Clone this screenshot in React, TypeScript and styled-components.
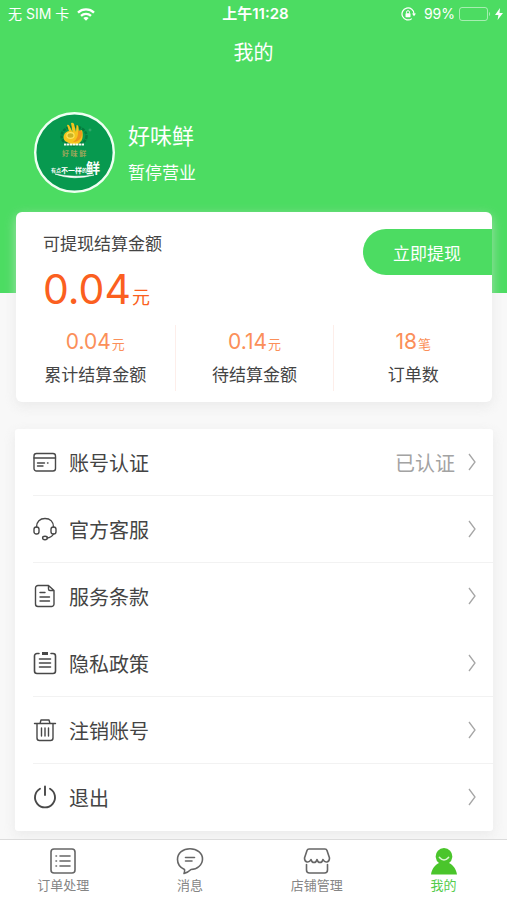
import React from "react";
import styled, { createGlobalStyle } from "styled-components";

const green = "#4cdc62";
const ink = "#444";

const GlobalStyle = createGlobalStyle`
  * { box-sizing: border-box; }
  body {
    margin: 0;
    background: #f8f8f8;
    color: ${ink};
    font-family: Inter, "Noto Sans CJK SC", sans-serif;
    font-size: 17px;
  }
  button { font: inherit; color: inherit; border: 0; padding: 0; background: none; cursor: pointer; }
  h1, h2, p, ul { margin: 0; padding: 0; font-weight: 400; }
  svg { display: block; flex: none; }
`;

const Page = styled.div`
  display: flex;
  flex-direction: column;
  min-height: 100vh;
`;

const Hero = styled.header`
  background: ${green};
  color: #fff;
  padding-bottom: 100px;
`;

const StatusBar = styled.div`
  display: grid;
  grid-template-columns: 1fr auto 1fr;
  align-items: center;
  height: 28px;
  padding: 0 4px 0 8px;
  font-size: 14px;
  line-height: 20px;
`;

const StatusGroup = styled.div<{ $end?: boolean }>`
  display: flex;
  align-items: center;
  gap: 8px;
  justify-content: ${(p) => (p.$end ? "flex-end" : "flex-start")};
`;

const Power = styled.span`
  display: flex;
  align-items: center;
  gap: 4px;
`;

const Clock = styled.time`
  font-size: 15px;
  font-weight: 600;
`;

const Title = styled.h1`
  padding: 8px 0;
  font-size: 20px;
  line-height: 34px;
  text-align: center;
`;

const Profile = styled.section`
  display: flex;
  align-items: center;
  gap: 13px;
  padding: 34px 34px 0;
`;

const ShopName = styled.h2`
  padding-top: 2px;
  font-size: 22px;
  line-height: 38px;
`;

const ShopState = styled.p`
  font-size: 17px;
  line-height: 36px;
`;

const Main = styled.main`
  flex: 1;
  display: flex;
  flex-direction: column;
  gap: 27px;
  margin-top: -81px;
  padding: 0 14px 8px 15px;
`;

const Balance = styled.section`
  margin: 0 1px;
  padding: 16px 0 11px;
  border-radius: 6px;
  background: #fff;
  box-shadow: 0 4px 12px rgba(225, 225, 225, 0.6);
`;

const BalanceTop = styled.div`
  display: flex;
  justify-content: space-between;
  align-items: flex-start;
  padding-left: 27px;
`;

const BalanceLabel = styled.p`
  line-height: 32px;
`;

const Amount = styled.p<{ $large?: boolean }>`
  color: ${(p) => (p.$large ? "#fb5f20" : "#fb8f59")};
  font-size: ${(p) => (p.$large ? 41 : 21)}px;
  line-height: ${(p) => (p.$large ? 58 : 34)}px;
`;

const Unit = styled.small<{ $large?: boolean }>`
  margin-left: 1px;
  font-size: ${(p) => (p.$large ? 18 : 13)}px;
  line-height: 1;
`;

const Withdraw = styled.button`
  height: 46px;
  margin-top: 1px;
  padding: 0 31px 0 30px;
  border-radius: 23px 0 0 23px;
  background: ${green};
  color: #fff;
`;

const Stats = styled.div`
  display: grid;
  grid-template-columns: repeat(3, 1fr);
  margin-top: 7px;
`;

const Stat = styled.div`
  text-align: center;
  & + & { border-left: 1px solid #fdeeea; }
`;

const StatLabel = styled.p`
  line-height: 32px;
`;

const Menu = styled.ul`
  list-style: none;
  border-radius: 3px;
  background: #fff;
  box-shadow: 0 4px 12px rgba(225, 225, 225, 0.6);
`;

const MenuItem = styled.li<{ $divided: boolean }>`
  margin-left: 18px;
  border-bottom: 1px solid ${(p) => (p.$divided ? "#f2f2f2" : "transparent")};
`;

const MenuButton = styled.button`
  display: flex;
  align-items: center;
  width: 100%;
  height: 66px;
  gap: 12px;
  padding-right: 16px;
  font-size: 20px;
  text-align: left;
`;

const MenuText = styled.span`
  flex: 1;
`;

const MenuNote = styled.span`
  color: #a3a3a3;
`;

const TabBar = styled.nav`
  display: grid;
  grid-template-columns: repeat(4, 1fr);
  height: 61px;
  border-top: 1px solid #dcdcdc;
  background: #fff;
`;

const Tab = styled.button<{ $active?: boolean }>`
  display: flex;
  flex-direction: column;
  align-items: center;
  padding-top: 7px;
  color: ${(p) => (p.$active ? "#54cc4b" : "#858585")};
  font-size: 13px;
  line-height: 20px;
`;

const icon = {
  width: 24,
  height: 24,
  viewBox: "0 0 24 24",
  fill: "none",
  stroke: "#484848",
  strokeWidth: 1.4,
  strokeLinecap: "round" as const,
  strokeLinejoin: "round" as const,
  "aria-hidden": true,
};

const tabIcon = { ...icon, width: 28, height: 28, viewBox: "0 0 28 28", stroke: "#666", strokeWidth: 1.6 };

const Wifi = () => (
  <svg width="18" height="13" viewBox="0 0 18 13" fill="none" stroke="#fff" strokeWidth="2.3" aria-hidden>
    <path d="M1 4.6C5.4.4 12.6.4 17 4.6" />
    <path d="M4 7.9C6.8 5.3 11.2 5.3 14 7.9" />
    <path d="M9 12.7 6.3 9.9C7.8 8.6 10.2 8.6 11.7 9.9Z" fill="#fff" stroke="none" />
  </svg>
);

const RotationLock = () => (
  <svg width="15" height="14" viewBox="0 0 15 14" fill="none" stroke="#fff" strokeWidth="1.2" aria-hidden>
    <path d="M10.8 11.6A6 6 0 1 1 13 7" />
    <path d="M11 6.5h4L13 9.2Z" fill="#fff" stroke="none" />
    <rect x="4.5" y="6.3" width="5" height="3.9" rx=".6" fill="#fff" stroke="none" />
    <path d="M5.5 6.5V5.2a1.5 1.5 0 0 1 3 0v1.3" strokeWidth="1" />
  </svg>
);

const Battery = () => (
  <svg width="32" height="14" viewBox="0 0 32 14" fill="none" aria-hidden>
    <rect x=".5" y=".5" width="28" height="13" rx="2.5" stroke="#fff" strokeOpacity=".5" />
    <path d="M30 5c1.5.5 1.5 3.5 0 4Z" fill="#fff" fillOpacity=".5" />
  </svg>
);

const Bolt = () => (
  <svg width="8" height="12" viewBox="0 0 8 12" fill="#fff" aria-hidden>
    <path d="M5 0 0 7h3.4L2.6 12 8 4.9H4.5Z" />
  </svg>
);

const ShopLogo = () => (
  <svg width="81" height="81" viewBox="0 0 81 81" role="img" aria-label="好味鲜">
    <circle cx="40.5" cy="40.5" r="39.3" fill="#07994f" stroke="#effff2" strokeWidth="2.4" />
    <ellipse cx="40" cy="24" rx="12.5" ry="9.5" fill="none" stroke="#067a3c" strokeWidth="2.5" strokeDasharray="3 1" />
    <path d="M31 29C28 25 30 20 35 19L33 13q1.500-1 2.500 1l3 6-1.500-9q2-1 3 1l2 8 .5-7q2 0 2 2l.5 7 2-4q1.500 0 1.500 2c1 7-1 11-7 13Q35 32 31 29Z" fill="#f5c41c" />
    <path d="M44 19q4-2 4 2c0 6-4 9-9 9q6-4 5-11Z" fill="#ee941d" />
    <ellipse cx="36.5" cy="23.5" rx="3.6" ry="2.8" fill="#c9b326" stroke="#ffe45a" strokeWidth="1.2" />
    <path d="M30 32.500h20" stroke="#f4fff4" strokeWidth="2.2" strokeDasharray="2.5 .5" />
    <circle cx="56" cy="18" r="1" fill="none" stroke="#5ab884" strokeWidth=".6" />
    <g fontFamily="Noto Sans CJK SC, sans-serif" fontWeight="700">
      <text x="28" y="44" fontSize="7" fill="#9aa65b">好 味 鲜</text>
      <text x="17" y="60" fontSize="5" fill="#fff">有点</text>
      <text x="27" y="61" fontSize="7" fill="#fff">不一样</text>
      <text x="48" y="60" fontSize="5" fill="#fff">的</text>
      <text x="52" y="61" fontSize="14" fill="#fff">鲜</text>
    </g>
    <path d="M21 62Q40 69 60 63Q40 66 21 62Z" fill="#fff" stroke="#fff" strokeWidth=".6" />
  </svg>
);

const CardIcon = () => (
  <svg {...icon}>
    <rect x="1" y="3.5" width="21.5" height="17.5" rx="2.5" />
    <path d="M1 8h21.5M4.500 13h7M4.500 16h5.500M14.500 13h.5" />
  </svg>
);

const HeadsetIcon = () => (
  <svg {...icon}>
    <path d="M3.500 10C3.500 4.500 7 1.500 12 1.500S20.500 4.500 20.500 10M20.500 17Q18.500 20.500 14 21" />
    <rect x="1" y="10" width="5" height="7" rx="2.3" />
    <rect x="18" y="10" width="5" height="7" rx="2.3" />
    <ellipse cx="12" cy="21" rx="2.4" ry="1.7" />
  </svg>
);

const DocumentIcon = () => (
  <svg {...icon}>
    <path d="M15.500 1.500H5A2.500 2.500 0 0 0 2.500 4v16A2.500 2.500 0 0 0 5 22.500h13.500A2.500 2.500 0 0 0 21 20V6.500ZM15.500 1.500v3.500q0 1.500 1.500 1.500h4M7 8.500h5M7 13h9.500M7 17h9.500" />
  </svg>
);

const ClipboardIcon = () => (
  <svg {...icon} strokeWidth={1.6}>
    <path d="M6 2.500H4A2.500 2.500 0 0 0 1.500 5v15A2.500 2.500 0 0 0 4 22.500h16A2.500 2.500 0 0 0 22.500 20V5A2.500 2.500 0 0 0 20 2.500H18M6.500 8h11M6.500 12h11M6.500 16h11" />
    <path d="M9 2.500h6" strokeWidth="3" strokeLinecap="butt" />
  </svg>
);

const TrashIcon = () => (
  <svg {...icon}>
    <path d="M1.500 5.500h21M7 5.500l1-3.500h8l1 3.500M4 6v14a2.500 2.500 0 0 0 2.500 2.500h11A2.500 2.500 0 0 0 20 20V6M8.500 10v8M12 10v8M15.500 10v8" />
  </svg>
);

const PowerIcon = () => (
  <svg {...icon} strokeWidth={1.9}>
    <path d="M7 3.700A10 10 0 1 0 17 3.700M12 1.500v8.500" />
  </svg>
);

const Chevron = () => (
  <svg width="10" height="18" viewBox="0 0 10 18" fill="none" stroke="#a6a6a6" strokeWidth="1.3" aria-hidden>
    <path d="M2 1l6 8-6 8" />
  </svg>
);

const OrdersIcon = () => (
  <svg {...tabIcon}>
    <rect x="2" y="2" width="24" height="24" rx="3" />
    <path d="M7 9h.5M7 14h.5M7 19h.5M11 9h10M11 14h10M11 19h10" />
  </svg>
);

const MessageIcon = () => (
  <svg {...tabIcon}>
    <path d="M8 26.500q1-2.500.5-4C4 20.500 1.500 17 1.500 12.500 1.500 6 7 1.800 14 1.800S26.500 6 26.500 12 21 22.500 15 22.500Q12 25.500 8 26.500ZM9.500 10.500h9M9.500 14h6.500" />
  </svg>
);

const ShopIcon = () => (
  <svg {...tabIcon}>
    <path d="M6 2h16q1.500 0 2 1.500l2.500 7.500c0 4.500-4.500 5.500-6.500 1.500-1 4-5 4-6 0-1 4-5 4-6 0-2 4-6.500 3-6.500-1.500L4 3.500Q4.500 2 6 2Z" />
    <path d="M3.500 17.500V23q0 3 3 3h15q3 0 3-3v-5.500" />
  </svg>
);

const PersonIcon = () => (
  <svg width="28" height="28" viewBox="0 0 28 28" aria-hidden>
    <path d="M1 27.500c1-6 4-9.500 8-11.500A8.300 8.300 0 1 1 19 16C23 18 26 21.500 27 27.500Z" fill="#4ac52b" />
    <path d="M9.500 10.500q4.500 5 9 0" fill="none" stroke="#d9f6d2" strokeWidth="1.7" strokeLinecap="round" />
  </svg>
);

const stats = [
  { value: "0.04", unit: "元", label: "累计结算金额" },
  { value: "0.14", unit: "元", label: "待结算金额" },
  { value: "18", unit: "笔", label: "订单数" },
];

const menu = [
  { text: "账号认证", Icon: CardIcon, note: "已认证", divided: true },
  { text: "官方客服", Icon: HeadsetIcon, divided: true },
  { text: "服务条款", Icon: DocumentIcon, divided: false },
  { text: "隐私政策", Icon: ClipboardIcon, divided: true },
  { text: "注销账号", Icon: TrashIcon, divided: true },
  { text: "退出", Icon: PowerIcon, divided: false },
];

const tabs = [
  { text: "订单处理", Icon: OrdersIcon },
  { text: "消息", Icon: MessageIcon },
  { text: "店铺管理", Icon: ShopIcon },
  { text: "我的", Icon: PersonIcon, active: true },
];

export default function App() {
  return (
    <Page lang="zh-CN">
      <GlobalStyle />
      <Hero>
        <StatusBar>
          <StatusGroup>
            <span>无 SIM 卡</span>
            <Wifi />
          </StatusGroup>
          <Clock>上午11:28</Clock>
          <StatusGroup $end>
            <RotationLock />
            <Power>
              <span>99%</span>
              <Battery />
              <Bolt />
            </Power>
          </StatusGroup>
        </StatusBar>
        <Title>我的</Title>
        <Profile>
          <ShopLogo />
          <div>
            <ShopName>好味鲜</ShopName>
            <ShopState>暂停营业</ShopState>
          </div>
        </Profile>
      </Hero>
      <Main>
        <Balance>
          <BalanceTop>
            <div>
              <BalanceLabel>可提现结算金额</BalanceLabel>
              <Amount $large>
                0.04<Unit $large>元</Unit>
              </Amount>
            </div>
            <Withdraw type="button">立即提现</Withdraw>
          </BalanceTop>
          <Stats>
            {stats.map((s) => (
              <Stat key={s.label}>
                <Amount>
                  {s.value}
                  <Unit>{s.unit}</Unit>
                </Amount>
                <StatLabel>{s.label}</StatLabel>
              </Stat>
            ))}
          </Stats>
        </Balance>
        <Menu>
          {menu.map(({ text, Icon, note, divided }) => (
            <MenuItem key={text} $divided={divided}>
              <MenuButton type="button">
                <Icon />
                <MenuText>{text}</MenuText>
                {note && <MenuNote>{note}</MenuNote>}
                <Chevron />
              </MenuButton>
            </MenuItem>
          ))}
        </Menu>
      </Main>
      <TabBar>
        {tabs.map(({ text, Icon, active }) => (
          <Tab key={text} type="button" $active={active} aria-current={active ? "page" : undefined}>
            <Icon />
            <span>{text}</span>
          </Tab>
        ))}
      </TabBar>
    </Page>
  );
}
